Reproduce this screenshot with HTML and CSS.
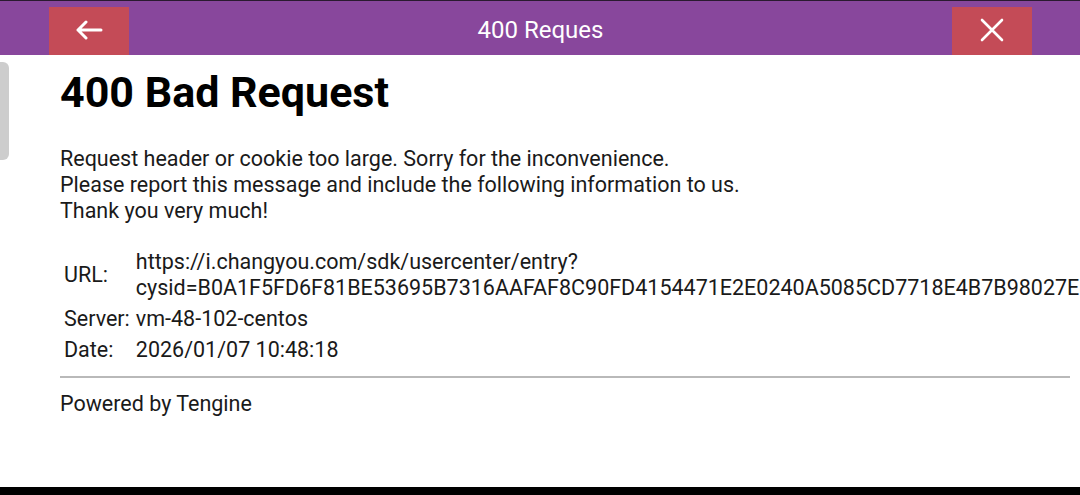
FILE: index.html
```html
<!DOCTYPE html>
<html>
<head>
<meta charset="utf-8">
<link rel="stylesheet" href="styles.css">
</head>
<body>
<div class="topline"></div>
<header class="bar">
  <button class="btn back" aria-label="Back">
    <svg width="28" height="20" viewBox="0 0 28 20"><path d="M26 10H3M11 2L3 10l8 8" fill="none" stroke="#fff" stroke-width="3" stroke-linecap="round" stroke-linejoin="round"/></svg>
  </button>
  <div class="title">400 Reques</div>
  <button class="btn close" aria-label="Close">
    <svg width="24" height="24" viewBox="0 0 24 24"><path d="M2 2L22 22M22 2L2 22" fill="none" stroke="#fff" stroke-width="2.6" stroke-linecap="round"/></svg>
  </button>
</header>
<div class="main">
  <div class="scroll"></div>
  <div class="page">
    <h1>400 Bad Request</h1>
    <p class="msg">Request header or cookie too large. Sorry for the inconvenience.<br>Please report this message and include the following information to us.<br>Thank you very much!</p>
    <table class="info">
      <tr><td class="lbl">URL:</td><td>https://i.changyou.com/sdk/usercenter/entry?<br>cysid=B0A1F5FD6F81BE53695B7316AAFAF8C90FD4154471E2E0240A5085CD7718E4B7B98027E8C</td></tr>
      <tr><td class="lbl">Server:</td><td>vm-48-102-centos</td></tr>
      <tr><td class="lbl">Date:</td><td>2026/01/07 10:48:18</td></tr>
    </table>
    <hr class="rule">
    <p class="powered">Powered by Tengine</p>
  </div>
</div>
<div class="bottombar"></div>
</body>
</html>
```
FILE: styles.css
```css
html, body {
  margin: 0;
  padding: 0;
  width: 1080px;
  height: 495px;
  overflow: hidden;
  background: #fff;
  font-family: Roboto, "Liberation Sans", sans-serif;
  color: #1a1a1a;
}
body {
  display: flex;
  flex-direction: column;
}
.topline {
  height: 1px;
  background: #2a1a30;
}
.bar {
  height: 54px;
  background: #88479c;
  display: flex;
  align-items: flex-end;
  padding: 0 48px 0 49px;
  flex-shrink: 0;
}
.btn {
  width: 80px;
  height: 48px;
  border: 0;
  padding: 0;
  margin: 0;
  background: #c44b57;
  display: flex;
  align-items: center;
  justify-content: center;
}
.btn.back svg { margin-top: -2px; }
.btn.close svg { margin-top: -2px; }
.title {
  flex: 1;
  align-self: center;
  text-align: center;
  color: #fff;
  font-size: 24px;
  padding-top: 4px;
}
.main {
  flex: 1;
  display: flex;
  position: relative;
  overflow: hidden;
}
.scroll {
  position: absolute;
  left: 0;
  top: 7px;
  width: 9px;
  height: 98px;
  background: #cdcdcd;
  border-radius: 0 6px 6px 0;
}
.page {
  padding-left: 60px;
  width: 1010px;
}
h1 {
  margin: 12px 0 0;
  font-size: 43px;
  font-weight: 700;
  line-height: 50px;
  color: #000;
}
.msg {
  margin: 29px 0 0;
  font-size: 21.5px;
  line-height: 26px;
}
.info {
  margin-top: 21px;
  border-spacing: 2px;
  font-size: 21.5px;
  line-height: 26px;
  white-space: nowrap;
}
.info td {
  padding: 2px 2px 1px 2px;
}
.rule {
  margin: 10px 0 0;
  border: 0;
  border-top: 2px solid #b9b9b9;
  width: 1010px;
}
.powered {
  margin: 13px 0 0;
  font-size: 21.5px;
  line-height: 26px;
}
.bottombar {
  height: 8px;
  background: #000;
  flex-shrink: 0;
}
```
